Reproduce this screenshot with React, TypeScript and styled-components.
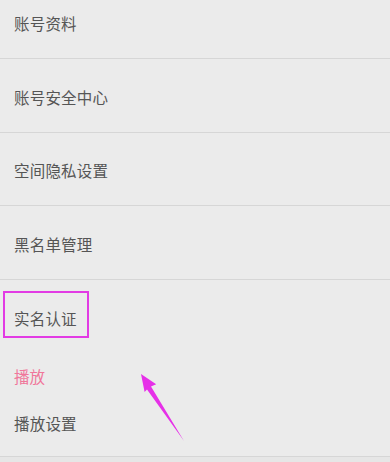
import styled, { createGlobalStyle } from 'styled-components';

const GlobalStyle = createGlobalStyle`
  html, body {
    margin: 0;
    padding: 0;
    background: #ebebeb;
  }
  body {
    font-family: "Noto Sans CJK SC", "Noto Sans", sans-serif;
  }
`;

const Page = styled.div`
  position: relative;
  width: 390px;
  height: 462px;
  overflow: hidden;
  background: #ebebeb;
`;

const List = styled.div`
  display: flex;
  flex-direction: column;
  margin-top: -14.6px;
`;

const Row = styled.div<{ $divider?: boolean; $h?: number; $pb?: number }>`
  display: flex;
  align-items: center;
  box-sizing: border-box;
  height: ${(p) => p.$h ?? 73.6}px;
  padding: 3px 14px ${(p) => p.$pb ?? 0}px;
  border-bottom: ${(p) => (p.$divider ? '1.5px solid #d6d6d6' : 'none')};
  font-size: 15.5px;
  color: #555;
  letter-spacing: 0.2px;
`;

const SectionTitle = styled.div`
  display: flex;
  align-items: center;
  height: 46px;
  padding: 0 14px;
  font-size: 15.5px;
  color: #f0769a;
`;

const Footer = styled.div`
  height: 20px;
  background: #e6e6e6;
`;

const HighlightBox = styled.div`
  position: absolute;
  left: 3px;
  top: 291px;
  width: 86px;
  height: 47px;
  box-sizing: border-box;
  border: 2px solid #e23be4;
`;

const Arrow = styled.svg`
  position: absolute;
  left: 135px;
  top: 368px;
`;

const items = ['账号资料', '账号安全中心', '空间隐私设置', '黑名单管理'];

export default function App() {
  return (
    <Page>
      <GlobalStyle />
      <List>
        {items.map((t) => (
          <Row key={t} $divider>
            {t}
          </Row>
        ))}
        <Row>实名认证</Row>
        <SectionTitle>播放</SectionTitle>
        <Row $divider $h={57.5} $pb={12}>
          播放设置
        </Row>
        <Footer />
      </List>
      <HighlightBox />
      <Arrow width="55" height="78" viewBox="0 0 55 78">
        <polygon
          points="6,6 21.2,16.2 16,18.6 49,73 12,21.4 9.6,23.9"
          fill="#e630e8"
        />
      </Arrow>
    </Page>
  );
}
